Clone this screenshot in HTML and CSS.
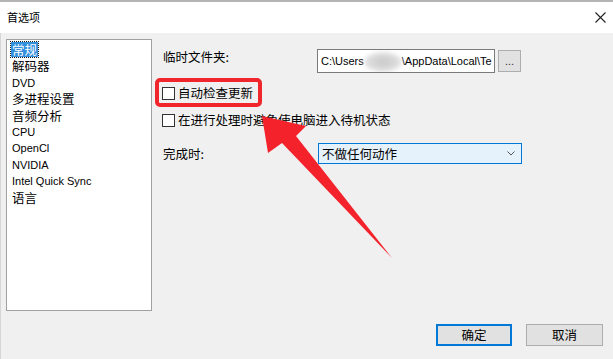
FILE: index.html
```html
<!DOCTYPE html>
<html lang="zh-CN">
<head>
    <meta charset="UTF-8">
    <title>首选项</title>
    <link rel="stylesheet" href="styles.css">
</head>
<body>
    <div class="window">
        <div class="titlebar">
            <span class="title">首选项</span>
            <svg class="close" width="11" height="11" viewBox="0 0 11 11">
                <path d="M0.5 0.5 L10.5 10.5 M10.5 0.5 L0.5 10.5" stroke="#222" stroke-width="1.1" fill="none"/>
            </svg>
        </div>

        <div class="content">
            <div class="main">
                <ul class="pages">
                    <li class="page cjk"><span class="selected">常规</span></li>
                    <li class="page cjk">解码器</li>
                    <li class="page lat">DVD</li>
                    <li class="page cjk">多进程设置</li>
                    <li class="page cjk">音频分析</li>
                    <li class="page lat">CPU</li>
                    <li class="page lat">OpenCl</li>
                    <li class="page lat">NVIDIA</li>
                    <li class="page lat">Intel Quick Sync</li>
                    <li class="page cjk">语言</li>
                </ul>

                <div class="settings">
                    <div class="row row-folder">
                        <span class="field-label">临时文件夹:</span>
                        <div class="path-box">C:\Users<span class="blur"></span>\AppData\Local\Te</div>
                        <button class="browse">...</button>
                    </div>

                    <label class="check-row">
                        <span class="checkbox"></span>
                        <span>自动检查更新</span>
                    </label>

                    <label class="check-row">
                        <span class="checkbox"></span>
                        <span>在进行处理时避免使电脑进入待机状态</span>
                    </label>

                    <div class="row row-finish">
                        <span class="field-label">完成时:</span>
                        <div class="select">
                            <span>不做任何动作</span>
                            <svg width="8" height="5" viewBox="0 0 8 5">
                                <path d="M0.5 0.5 L4 4 L7.5 0.5" stroke="#555" stroke-width="1" fill="none"/>
                            </svg>
                        </div>
                    </div>
                </div>
            </div>

            <div class="footer">
                <button class="btn btn-default">确定</button>
                <button class="btn btn-cancel">取消</button>
            </div>
        </div>

        <!-- annotation drawn over the dialog -->
        <div class="highlight"></div>
        <svg class="arrow" width="613" height="359" viewBox="0 0 613 359">
            <polygon points="262,116 306,126 296,136 392,258 282,143 268,153" fill="#f4232b"/>
        </svg>
    </div>
</body>
</html>
```

FILE: styles.css
```css
* {
    box-sizing: border-box;
}

body {
    margin: 0;
    font-family: "Liberation Sans", "Noto Sans CJK SC", sans-serif;
    color: #000;
    background: #f0f0f0;
}

.window {
    position: relative;
    width: 613px;
    height: 359px;
    overflow: hidden;
}

/* Title bar */
.titlebar {
    height: 33px;
    border-top: 2px solid #b4b4b4;
    background: #fff;
    display: flex;
    align-items: center;
    justify-content: space-between;
    padding: 0 7px 1px 7px;
}

.title {
    font-family: "Noto Sans CJK SC", sans-serif;
    font-size: 11px;
    line-height: 14px;
}

/* Dialog body */
.content {
    height: 326px;
    background: #f0f0f0;
    border-left: 1px solid #d6d6d6;
    padding-left: 5px;
}

.main {
    display: flex;
    padding-top: 6px;
}

.pages {
    width: 146px;
    height: 272px;
    margin: 0;
    padding: 2px 0 0 0;
    list-style: none;
    background: #fff;
    border: 1px solid #a0a0a0;
}

.page {
    height: 16.4px;
    line-height: 16.4px;
    padding-left: 5px;
    white-space: nowrap;
}

.page.cjk {
    font-family: "Noto Sans CJK SC", sans-serif;
    font-size: 12.5px;
}

.page.lat {
    font-size: 11px;
}

.selected {
    display: inline-block;
    margin-left: -1px;
    padding: 0 1px;
    line-height: 15px;
    background: #3390dd;
    color: #fff;
    outline: 1px dotted #1a1a1a;
}

.settings {
    margin-left: 11px;
    padding-top: 10px;
    font-family: "Noto Sans CJK SC", sans-serif;
    font-size: 12.5px;
}

.row {
    display: flex;
}

.row-folder {
    height: 24px;
}

.field-label {
    width: 154px;
    line-height: 16px;
}

.path-box {
    width: 178px;
    height: 24px;
    background: #fff;
    border: 1px solid #7a7a7a;
    padding-left: 3px;
    font-family: "Liberation Sans", sans-serif;
    font-size: 11px;
    line-height: 22px;
    white-space: nowrap;
    overflow: hidden;
}

.blur {
    display: inline-block;
    width: 38px;
    height: 20px;
    vertical-align: middle;
    border-radius: 50%;
    background: radial-gradient(ellipse at center, #c9c9c9 0%, #dcdcdc 55%, #ffffff 100%);
    filter: blur(2px);
}

.browse {
    width: 23px;
    height: 22px;
    margin: 1px 0 0 3px;
    padding: 0;
    background: #e1e1e1;
    border: 1px solid #adadad;
    font-family: "Liberation Sans", sans-serif;
    font-size: 11px;
    line-height: 14px;
    color: #333;
}

.check-row {
    display: flex;
    align-items: center;
    height: 14px;
    margin-top: 13px;
    line-height: 14px;
    white-space: nowrap;
}

.checkbox {
    width: 13px;
    height: 13px;
    margin-left: -1px;
    margin-right: 3px;
    background: #fff;
    border: 1px solid #333;
}

.row-finish {
    height: 21px;
    margin-top: 16px;
    align-items: center;
}

.row-finish .field-label {
    width: 155px;
}

.select {
    width: 204px;
    height: 21px;
    display: flex;
    align-items: center;
    justify-content: space-between;
    padding: 0 6px 0 3px;
    background: #e5f1fb;
    border: 1px solid #0078d7;
    line-height: 16px;
}

/* OK / Cancel */
.footer {
    display: flex;
    justify-content: flex-end;
    gap: 14px;
    margin-top: 13px;
    padding-right: 10px;
}

.btn {
    height: 22px;
    padding: 0;
    background: #e1e1e1;
    border: 1px solid #adadad;
    font-family: "Noto Sans CJK SC", sans-serif;
    font-size: 12.5px;
    line-height: 18px;
    color: #000;
}

.btn-default {
    width: 76px;
    border-color: #0078d7;
    box-shadow: inset 0 0 0 1px #0078d7;
}

.btn-cancel {
    width: 77px;
}

/* Red annotation */
.highlight {
    position: absolute;
    left: 155px;
    top: 78px;
    width: 107px;
    height: 29px;
    border: 4px solid #f0262c;
    border-radius: 5px;
}

.arrow {
    position: absolute;
    left: 0;
    top: 0;
    pointer-events: none;
}
```
